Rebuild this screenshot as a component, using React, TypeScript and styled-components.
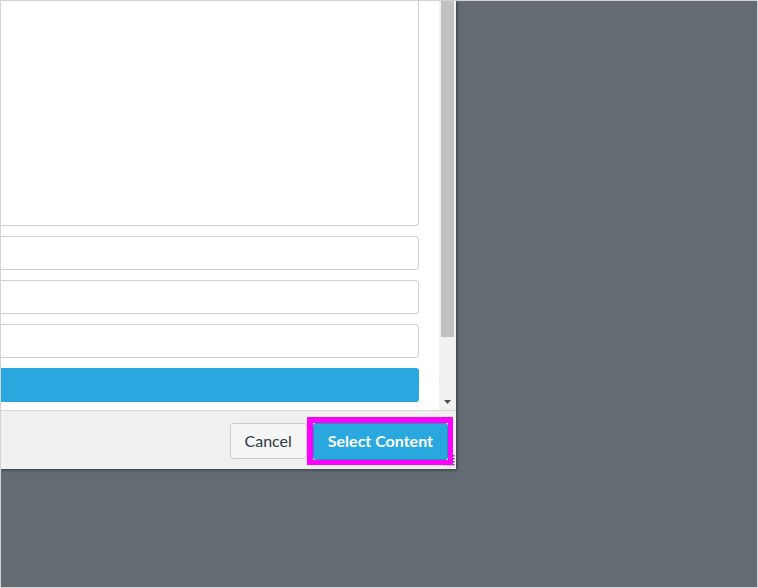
import React from "react";
import styled, { createGlobalStyle } from "styled-components";

const Global = createGlobalStyle`
  html, body { margin: 0; padding: 0; }
  body { font-family: Lato, "Liberation Sans", Arial, sans-serif; }
`;

const Frame = styled.div`
  box-sizing: border-box;
  width: 758px;
  height: 588px;
  border: 1px solid #d3d3d3;
  background: #636b73;
  overflow: hidden;
  display: flex;
  align-items: flex-start;
`;

const Dialog = styled.div`
  position: relative;
  width: 455px;
  height: 468px;
  display: flex;
  flex-direction: column;
  background: #fff;
  box-shadow: 1px 1px 3px rgba(0, 0, 0, 0.45);
`;

const Body = styled.div`
  display: flex;
  height: 409px;
`;

const Content = styled.div`
  flex: 1;
  display: flex;
  flex-direction: column;
  gap: 10px;
  padding: 0 20px 8px 0;
  background: #fff;
`;

const Field = styled.div<{ $h: number }>`
  box-sizing: border-box;
  height: ${(p) => p.$h}px;
  border: 1px solid #d0d0d0;
  border-left: none;
  border-radius: 0 4px 4px 0;
  background: #fff;
`;

const TextArea = styled(Field)`
  border-top: none;
  border-radius: 0 0 4px 0;
`;

const BlueBar = styled.div`
  height: 34px;
  background: #29a8e0;
  border-radius: 0 3px 3px 0;
`;

const ScrollTrack = styled.div`
  width: 17px;
  background: #f1f1f1;
  display: flex;
  flex-direction: column;
  align-items: center;
`;

const Thumb = styled.div`
  width: 13px;
  height: 336px;
  background: #c1c1c1;
`;

const ArrowSlot = styled.div`
  margin-top: auto;
  display: flex;
  justify-content: center;
  padding-bottom: 6px;
  line-height: 0;
`;

const Footer = styled.div`
  box-sizing: border-box;
  height: 59px;
  border-top: 1px solid #d6d6d6;
  background: #f0f0f0;
  display: flex;
  align-items: center;
  justify-content: flex-end;
  padding: 1px 3px 0 0;
`;

const Button = styled.button<{ $primary?: boolean }>`
  box-sizing: border-box;
  display: block;
  margin: 0;
  font-family: Lato, "Liberation Sans", Arial, sans-serif;
  font-size: 16px;
  line-height: 20px;
  border-radius: 3px;
  cursor: pointer;
  height: ${(p) => (p.$primary ? 37 : 36)}px;
  padding: 0 14px;
  color: ${(p) => (p.$primary ? "#fff" : "#2d3b45")};
  background: ${(p) => (p.$primary ? "#29a8e0" : "#f5f5f5")};
  border: 1px solid ${(p) => (p.$primary ? "#2090c4" : "#c7cdd1")};
  font-weight: ${(p) => (p.$primary ? 700 : 400)};
  outline: none;
`;

const HighlightRing = styled.div`
  position: relative;
  z-index: 1;
  border-style: solid;
  border-color: #ff00ff;
  border-width: 6px 5px 5px 6px;
`;

const Grip = styled.svg`
  position: absolute;
  right: 1px;
  bottom: 3px;
`;

export default function App() {
  const dots: [number, number][] = [];
  for (let r = 0; r < 4; r++) {
    for (let c = 0; c < 4; c++) {
      if (c + r >= 3) dots.push([c * 3, r * 3]);
    }
  }
  return (
    <>
      <Global />
      <Frame>
        <Dialog>
          <Body>
            <Content>
              <TextArea $h={225} />
              <Field $h={34} />
              <Field $h={34} />
              <Field $h={34} />
              <BlueBar />
            </Content>
            <ScrollTrack>
              <Thumb />
              <ArrowSlot>
                <svg width="7" height="4" viewBox="0 0 7 4">
                  <polygon points="0,0 7,0 3.5,4" fill="#505050" />
                </svg>
              </ArrowSlot>
            </ScrollTrack>
          </Body>
          <Grip width="11" height="11" viewBox="0 0 11 11">
            {dots.map(([x, y], i) => (
              <rect key={i} x={x} y={y} width="1.5" height="1.5" fill="#555" />
            ))}
          </Grip>
          <Footer>
            <Button>Cancel</Button>
            <HighlightRing>
              <Button $primary>Select Content</Button>
            </HighlightRing>
          </Footer>
        </Dialog>
      </Frame>
    </>
  );
}
